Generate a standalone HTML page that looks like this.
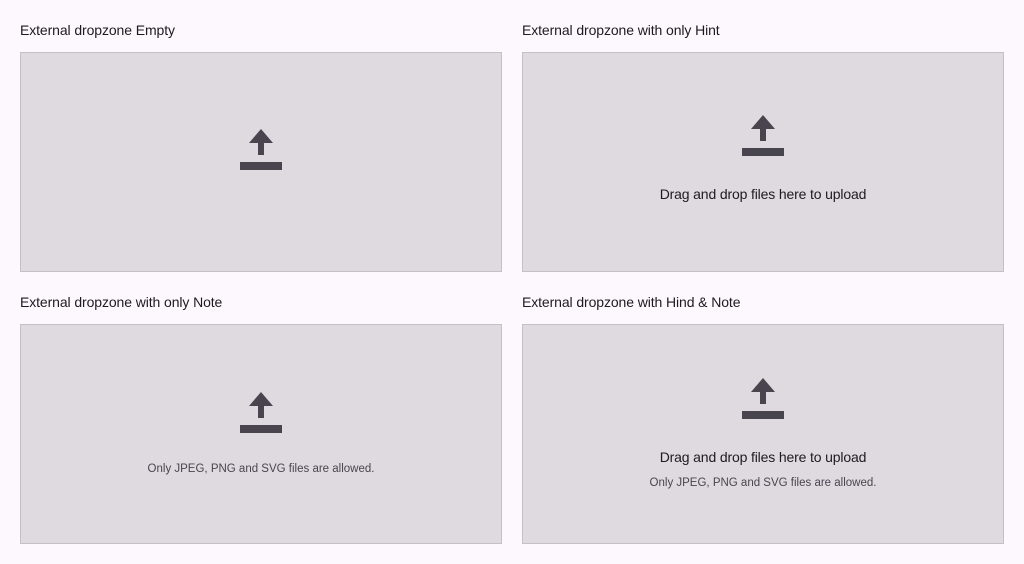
<html><head><style>
body{margin:0;width:1024px;height:564px;background:#fdf8fd;font-family:"Liberation Sans",sans-serif;position:relative;overflow:hidden}
.t{position:absolute;font-size:14px;color:#1d1b20;line-height:16px;letter-spacing:-0.1px}
.b{position:absolute;width:480px;height:218px;background:#dedae0;border:1px solid #c4c0c8}
svg{position:absolute}
.h{position:absolute;font-size:14px;color:#1d1b20;width:482px;text-align:center;line-height:16px;letter-spacing:-0.15px}
.n{position:absolute;font-size:11.5px;color:#49454f;width:482px;text-align:center;line-height:14px}
</style></head><body>
<div class="t" style="left:20px;top:22px">External dropzone Empty</div>
<div class="t" style="left:522px;top:22px">External dropzone with only Hint</div>
<div class="t" style="left:20px;top:294px">External dropzone with only Note</div>
<div class="t" style="left:522px;top:294px">External dropzone with Hind &amp; Note</div>
<div class="b" style="left:20px;top:52px"></div>
<div class="b" style="left:522px;top:52px"></div>
<div class="b" style="left:20px;top:324px"></div>
<div class="b" style="left:522px;top:324px"></div>
<svg style="left:240px;top:129px" width="42" height="41"><path d="M21 0L33 14H24V26H18V14H9Z M0 33H42V41H0Z" fill="#49454f"/></svg>
<svg style="left:742px;top:115px" width="42" height="41"><path d="M21 0L33 14H24V26H18V14H9Z M0 33H42V41H0Z" fill="#49454f"/></svg>
<svg style="left:240px;top:392px" width="42" height="41"><path d="M21 0L33 14H24V26H18V14H9Z M0 33H42V41H0Z" fill="#49454f"/></svg>
<svg style="left:742px;top:378px" width="42" height="41"><path d="M21 0L33 14H24V26H18V14H9Z M0 33H42V41H0Z" fill="#49454f"/></svg>
<div class="h" style="left:522px;top:186px">Drag and drop files here to upload</div>
<div class="n" style="left:20px;top:462px">Only JPEG, PNG and SVG files are allowed.</div>
<div class="h" style="left:522px;top:449px">Drag and drop files here to upload</div>
<div class="n" style="left:522px;top:476px">Only JPEG, PNG and SVG files are allowed.</div>
</body></html>
